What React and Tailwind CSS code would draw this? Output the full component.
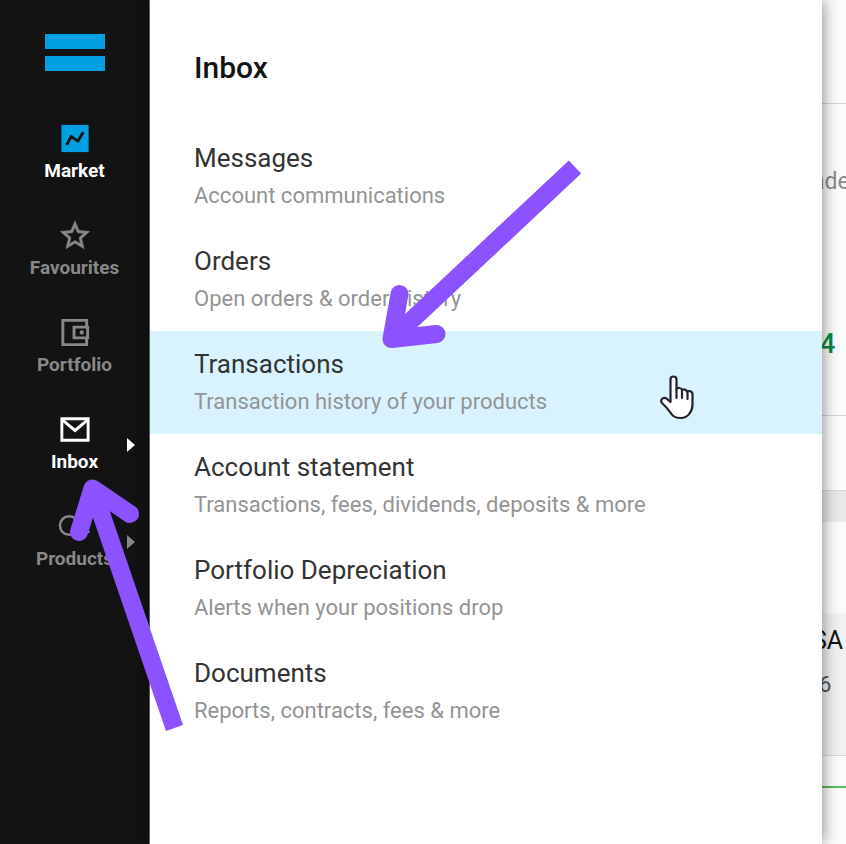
const NAV = [
  { label: 'Market', icon: 'market', tone: 'text-white' },
  { label: 'Favourites', icon: 'star', tone: 'text-[#888888]' },
  { label: 'Portfolio', icon: 'wallet', tone: 'text-[#888888]' },
  { label: 'Inbox', icon: 'mail', tone: 'text-white', more: true },
  { label: 'Products', icon: 'products', tone: 'text-[#888888]', more: true },
];

const ITEMS = [
  { title: 'Messages', text: 'Account communications' },
  { title: 'Orders', text: 'Open orders & order history' },
  { title: 'Transactions', text: 'Transaction history of your products', active: true },
  { title: 'Account statement', text: 'Transactions, fees, dividends, deposits & more' },
  { title: 'Portfolio Depreciation', text: 'Alerts when your positions drop' },
  { title: 'Documents', text: 'Reports, contracts, fees & more' },
];

function NavIcon({ name }) {
  return (
    <svg viewBox="0 0 36 36" className="size-9" fill="none" stroke="currentColor" strokeWidth="3" aria-hidden="true">
      {name === 'market' && (
        <>
          <path d="M4 4h28v28H4z" fill="#009fdf" stroke="none" />
          <path d="M9.500 24.500l4.500-8.500 7 4.500 5.500-9" stroke="#131313" strokeWidth="3" />
        </>
      )}
      {name === 'star' && (
        <path
          stroke="currentColor"
          strokeWidth="0.6"
          fill="currentColor"
          d="M33 13.860l-10.790-.930L18 3l-4.210 9.950L3 13.860l8.190 7.100L8.730 31.500 18 25.910l9.270 5.590-2.440-10.540L33 13.860zM18 23.100l-5.640 3.410 1.500-6.420-4.980-4.320 6.570-.570L18 9.150l2.570 6.070 6.570.570-4.980 4.320 1.500 6.420L18 23.100z"
        />
      )}
      {name === 'wallet' && (
        <>
          <path d="M30 12V5.500H5.500v25H30V24" strokeWidth="3" />
          <path d="M17 12.500h14v11H17z" strokeWidth="3" />
          <circle cx="25" cy="18" r="2.200" fill="currentColor" stroke="none" />
        </>
      )}
      {name === 'mail' && (
        <>
          <path d="M4.500 7h27v22h-27z" />
          <path d="M5 8l13 11L31 8" />
        </>
      )}
      {name === 'products' && (
        <>
          <circle cx="12" cy="17" r="9.500" strokeWidth="2.600" />
          <path d="M24 9.500h9M27 15h6M29 23.500h4" strokeWidth="2.600" />
        </>
      )}
    </svg>
  );
}

function Sidebar() {
  return (
    <nav className="flex w-[150px] shrink-0 flex-col border-r border-[#777777] bg-[#131313]">
      <a href="#home" aria-label="Home" className="mx-auto mt-[34px] flex w-[60px] flex-col gap-[7px]">
        <span className="h-[15px] bg-[#009fdf]" />
        <span className="h-[15px] bg-[#009fdf]" />
      </a>
      <div className="mt-[50px] flex flex-col gap-[37px]">
        {NAV.map((n) => (
          <a key={n.label} href="#nav" className={`relative flex h-[60px] flex-col items-center ${n.tone}`}>
            <NavIcon name={n.icon} />
            <span className="mt-[5px] text-[19px] leading-5 font-bold">{n.label}</span>
            {n.more && (
              <svg viewBox="0 0 8 14" className="absolute top-[26px] right-[14px] h-[14px] w-2" fill="currentColor" aria-hidden="true">
                <path d="M0 0l8 7-8 7z" />
              </svg>
            )}
          </a>
        ))}
      </div>
    </nav>
  );
}

function Hand() {
  return (
    <svg viewBox="0 0 36 46" className="absolute top-[43px] right-[127px] h-[46px] w-9" aria-hidden="true">
      <path
        d="M11.500 28V5.500a3 3 0 0 1 6 0V15c1-1.500 5-1.500 5.500 1 1-1 4.500-.500 5 1.500 1.500-1 5.500-.500 5.500 2.500V31c0 4-1 6-3 8.500-2 3-5 4.500-9 4.500-5 0-7-1-9-4-3-4-5-7-9-10.500-3-3 0-7 4-5z"
        fill="#ffffff"
        stroke="#23232f"
        strokeWidth="2.200"
        strokeLinejoin="round"
      />
      <path d="M17.500 15v9M23 16v8M28.500 18v7" stroke="#23232f" strokeWidth="2.200" strokeLinecap="round" />
    </svg>
  );
}

function InboxPanel() {
  return (
    <main className="z-10 min-w-0 flex-1 bg-white shadow-[0_0_16px_rgba(0,0,0,0.5)]">
      <h1 className="pt-12 pl-11 text-[30px] leading-10 font-medium text-[#131313]">Inbox</h1>
      <ul className="mt-[37px]">
        {ITEMS.map((i) => (
          <li key={i.title} className="relative">
            <a href="#item" className={`block h-[103px] pt-[17px] pl-11 ${i.active ? 'bg-[#d9f3fe]' : ''}`}>
              <span className="block text-[26px] leading-8 text-[#333333]">{i.title}</span>
              <span className="mt-[6px] block text-[22px] leading-8 text-[#949494]">{i.text}</span>
            </a>
            {i.active && <Hand />}
          </li>
        ))}
      </ul>
    </main>
  );
}

function PageBehind() {
  return (
    <aside className="flex w-6 shrink-0 flex-col overflow-hidden bg-[#fcfcfc] whitespace-nowrap">
      <div className="h-[104px] border-b border-[#d8d8d8]" />
      <div className="h-[312px] border-b border-[#d8d8d8] pt-[62px]">
        <p className="-ml-2.5 text-[23px] leading-8 text-[#888888]">ade</p>
        <p className="-ml-0.5 mt-[130px] text-[27px] leading-8 font-medium text-[#078a45]">4</p>
      </div>
      <div className="h-[74px]" />
      <div className="h-8 border-t border-[#d8d8d8] bg-[#e9e9e9]" />
      <div className="h-[91px]" />
      <div className="h-[143px] border-b border-[#d8d8d8] bg-[#f2f2f2] pt-3">
        <p className="-ml-2.5 text-[25px] leading-8 text-[#131313]">SA</p>
        <p className="-ml-[3px] mt-3 text-[22px] leading-8 text-[#555555]">6</p>
      </div>
      <div className="h-8 border-b-2 border-[#5cb860]" />
    </aside>
  );
}

function Arrows() {
  return (
    <svg
      className="pointer-events-none absolute top-0 left-0 z-20 h-[844px] w-[846px]"
      viewBox="0 0 846 844"
      fill="none"
      stroke="#8c52ff"
      strokeWidth="18"
      strokeLinejoin="round"
      aria-hidden="true"
    >
      <path d="M575 167L391.500 339M174.500 728L92.500 488.500" />
      <path d="M399.500 294L391.500 339L436.500 334M79 532L92.500 488.500L130 514" strokeLinecap="round" />
    </svg>
  );
}

export default function App() {
  return (
    <div className="relative flex min-h-screen overflow-hidden bg-white font-[Roboto,sans-serif]">
      <Sidebar />
      <InboxPanel />
      <PageBehind />
      <Arrows />
    </div>
  );
}
